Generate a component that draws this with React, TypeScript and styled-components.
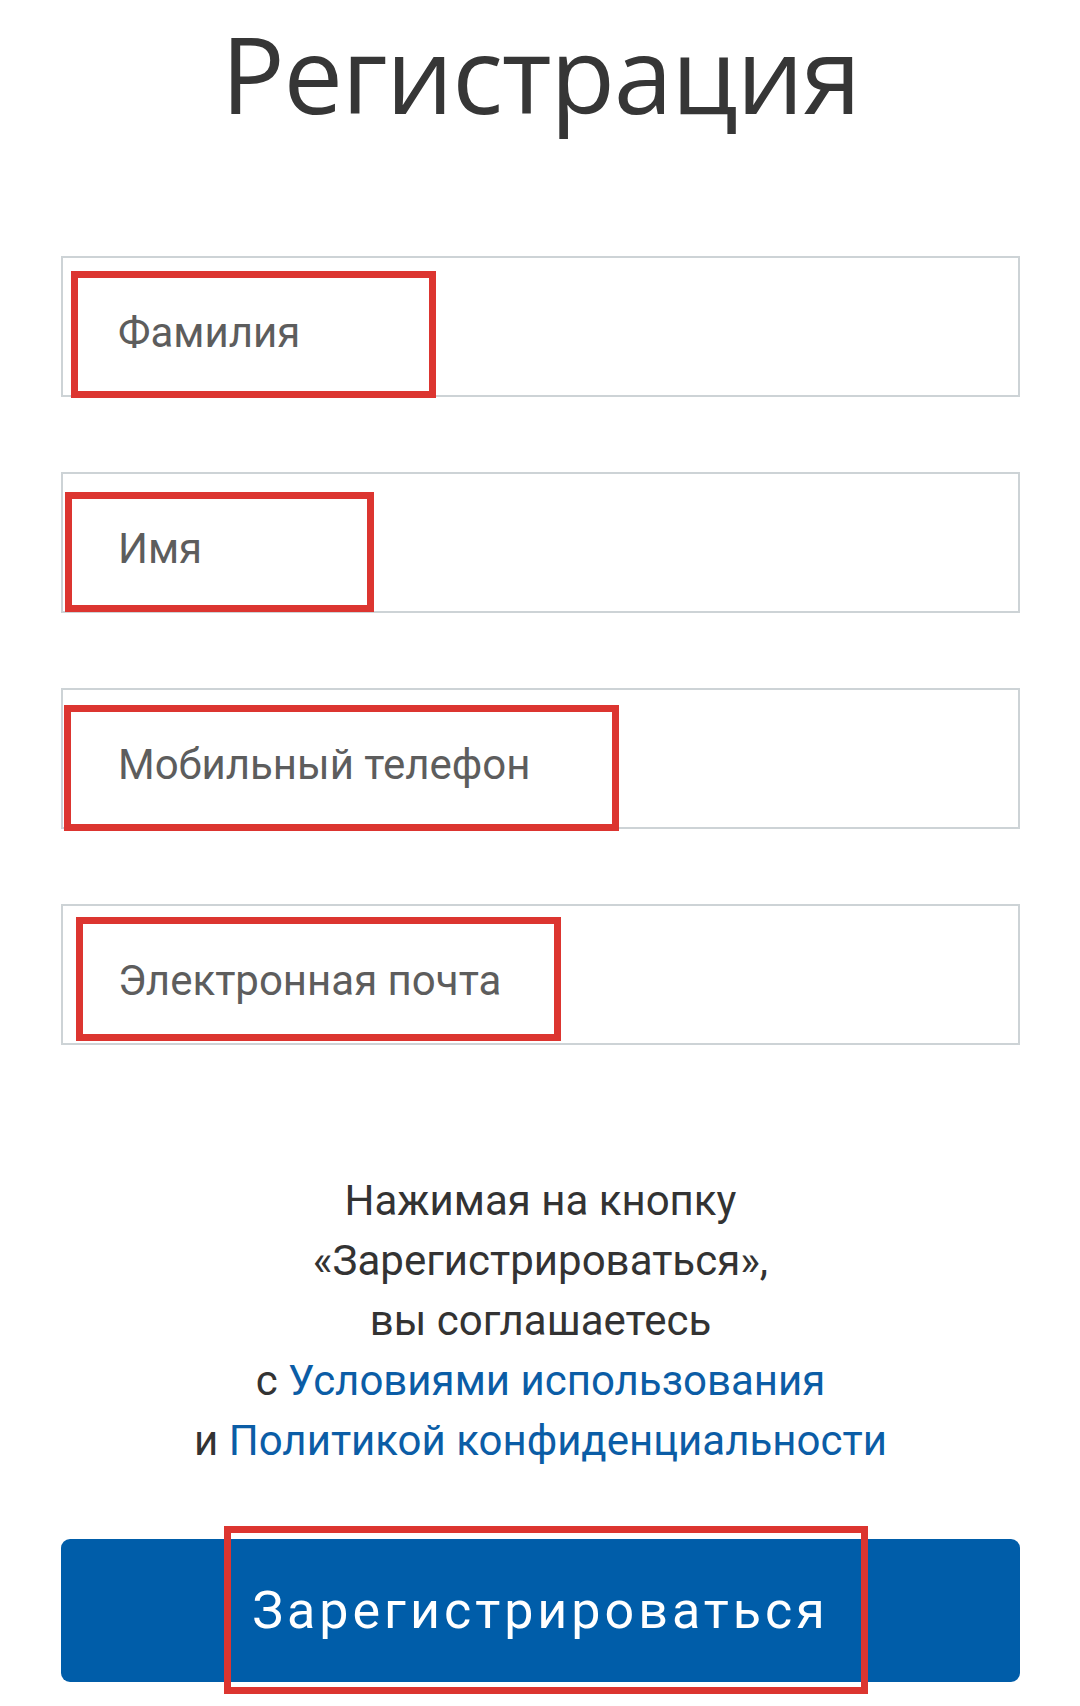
import styled, { createGlobalStyle } from 'styled-components';

const GlobalStyle = createGlobalStyle`
  html, body {
    margin: 0;
    padding: 0;
    background: #ffffff;
  }
  * {
    box-sizing: border-box;
  }
`;

const Page = styled.main`
  width: 1080px;
  padding: 0 60px 0 61px;
  font-family: Roboto, 'Noto Sans', sans-serif;
`;

const Title = styled.h1`
  margin: 0 0 110px;
  text-align: center;
  font-family: 'Open Sans', 'Noto Sans', sans-serif;
  font-weight: 400;
  font-size: 106px;
  line-height: 146px;
  letter-spacing: -1.3px;
  color: #363636;
`;

const Form = styled.form`
  display: flex;
  flex-direction: column;
  gap: 75px;
`;

const FieldBox = styled.label`
  position: relative;
  display: block;
  height: 141px;
  border: 2px solid #cdd3d6;
  background: #ffffff;
`;

const Input = styled.input`
  display: block;
  width: 100%;
  height: 100%;
  margin: 0;
  padding: 12px 0 0 55px;
  border: none;
  outline: none;
  background: transparent;
  font-family: Roboto, 'Noto Sans', sans-serif;
  font-size: 42px;
  color: #333;

  &::placeholder {
    color: #5d5d5d;
    opacity: 1;
  }
`;

// red annotation frames drawn over the screenshot
const Highlight = styled.span<{ $left: number; $top: number; $w: number; $h: number }>`
  position: absolute;
  left: ${p => p.$left}px;
  top: ${p => p.$top}px;
  width: ${p => p.$w}px;
  height: ${p => p.$h}px;
  border: 7px solid #dc3530;
  pointer-events: none;
`;

const Agreement = styled.p`
  margin: 126px 0 68px;
  text-align: center;
  font-size: 42px;
  line-height: 60px;
  color: #333333;
`;

const Link = styled.a`
  color: #0b5da6;
  text-decoration: none;
`;

const ButtonWrap = styled.div`
  position: relative;
  padding-bottom: 20px;
`;

const SubmitButton = styled.button`
  display: flex;
  align-items: center;
  justify-content: center;
  width: 100%;
  height: 143px;
  border: none;
  border-radius: 9px;
  background: #005da9;
  color: #ffffff;
  font-family: Roboto, 'Noto Sans', sans-serif;
  font-size: 52px;
  letter-spacing: 4px;
  cursor: pointer;
`;

const fields = [
  { name: 'lastName', label: 'Фамилия', frame: { left: 8, top: 13, w: 365, h: 127 } },
  { name: 'firstName', label: 'Имя', frame: { left: 2, top: 18, w: 309, h: 120 } },
  { name: 'phone', label: 'Мобильный телефон', frame: { left: 1, top: 15, w: 555, h: 126 } },
  { name: 'email', label: 'Электронная почта', frame: { left: 13, top: 11, w: 485, h: 124 } },
];

export default function App() {
  return (
    <>
      <GlobalStyle />
      <Page>
        <Title>Регистрация</Title>
        <Form onSubmit={e => e.preventDefault()}>
          {fields.map(f => (
            <FieldBox key={f.name}>
              <Input name={f.name} placeholder={f.label} />
              <Highlight $left={f.frame.left} $top={f.frame.top} $w={f.frame.w} $h={f.frame.h} />
            </FieldBox>
          ))}
        </Form>
        <Agreement>
          Нажимая на кнопку
          <br />
          «Зарегистрироваться»,
          <br />
          вы соглашаетесь
          <br />
          с <Link href="#">Условиями использования</Link>
          <br />
          и <Link href="#">Политикой конфиденциальности</Link>
        </Agreement>
        <ButtonWrap>
          <SubmitButton type="button">Зарегистрироваться</SubmitButton>
          <Highlight $left={163} $top={-13} $w={644} $h={168} />
        </ButtonWrap>
      </Page>
    </>
  );
}
